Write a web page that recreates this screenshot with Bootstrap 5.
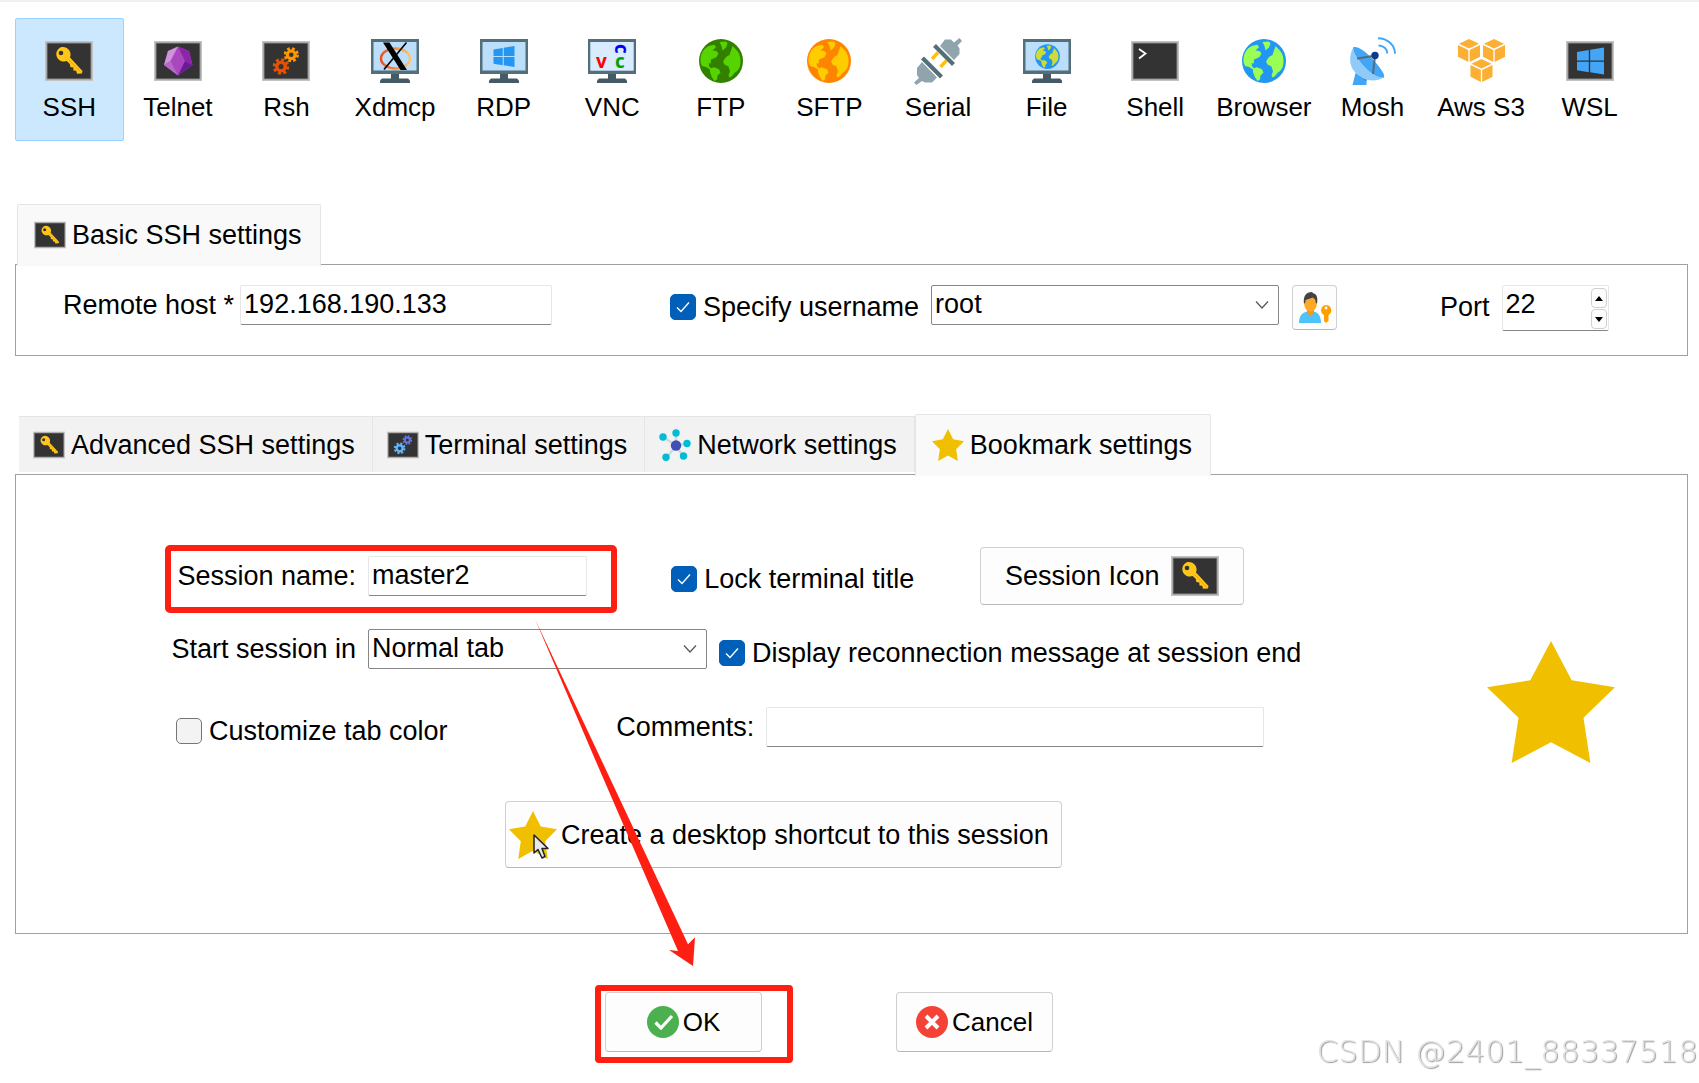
<!DOCTYPE html>
<html lang="en">
<head>
<meta charset="utf-8">
<meta name="viewport" content="width=device-width, initial-scale=1">
<title>Session settings</title>
<link href="https://cdn.jsdelivr.net/npm/bootstrap@5.3.0/dist/css/bootstrap.min.css" rel="stylesheet">
<style>
  body { font-family: "Liberation Sans", Arial, sans-serif; font-size: 27px; line-height: 40px; color: #000; background: #fff; border-top: 2px solid #f0f0f0; }
  label, .tab-text { white-space: nowrap; }

  .session-types { padding: 16px 55px 0 15px; }
  .session-type { flex: 1 1 0; min-width: 0; border: 1px solid transparent; border-radius: 2px; background: none; color: #000; padding: 18px 0; font-size: 26px; line-height: 30px; white-space: nowrap; gap: 7px; }
  .session-type.active { background: #cce8ff; border-color: #99d1ff; }
  .ico { width: 48px; height: 48px; flex: none; display: block; }
  .ico-sm { width: 32px; height: 32px; flex: none; display: block; }

  .settings { padding: 0 11px 0 15px; }
  .settings-basic { margin-top: 63px; }
  .settings-more { margin-top: 58px; }
  .settings .nav-tabs { border: 0; margin-bottom: -2px; padding-left: 2px; position: relative; z-index: 1; }
  .settings .nav-link { display: flex; align-items: center; gap: 6px; height: 62px; margin: 0; padding: 0 18px 2px 16px; border: 1px solid #e5e5e5; border-bottom: 0; border-radius: 2px 2px 0 0; background: #f9f9f9; color: #000; line-height: 40px; }
  .settings .nav-link:not(.active) { height: 56px; margin: 2px 0 4px; padding: 0 17px 0 14px; border-left: 0; border-radius: 0; background: #f2f2f2; }
  .settings .nav-link.active { background: #f9f9f9; color: #000; border-color: #e5e5e5; border-bottom: 0; }
  .settings-more .nav-tabs { padding-left: 4px; }
  .panel { border: 1px solid #a0a0a0; background: #fff; position: relative; }

  .field { display: block; height: 40px; border: 1px solid #e6e6e6; border-bottom: 1px solid #868686; border-radius: 2px; padding: 0 3px 2px; font-size: 27px; line-height: 34px; color: #000; background-color: #fff; }
  .form-select.field { border-color: #868686; padding: 0 34px 2px 3px; background-image: url("data:image/svg+xml,%3Csvg xmlns='http://www.w3.org/2000/svg' viewBox='0 0 14 10'%3E%3Cpath d='M1 1.5l6 6.5 6-6.5' fill='none' stroke='%23555' stroke-width='1.2'/%3E%3C/svg%3E"); background-size: 14px 10px; background-position: right 9px center; }
  .tick { gap: 7px; }
  .tick .form-check-input { width: 26px; height: 26px; margin: 0; border: 1px solid #767676; border-radius: 5px; background-color: #f3f3f3; }
  .tick .form-check-input:checked { background-color: #005fb8; border-color: #005fb8; background-size: 24px 24px; background-image: url("data:image/svg+xml,%3Csvg xmlns='http://www.w3.org/2000/svg' viewBox='0 0 24 24'%3E%3Cpath d='M6 12.5l4 4 8-9' fill='none' stroke='%23fff' stroke-width='1.4'/%3E%3C/svg%3E"); }
  .push { background: #fdfdfd; border: 1px solid #d0d0d0; border-bottom-color: #b8b8b8; border-radius: 4px; color: #000; font-size: 27px; line-height: 40px; padding: 0; display: flex; align-items: center; justify-content: center; white-space: nowrap; }

  .basic-grid { display: grid; grid-template-columns: 607fr 770fr 247fr; padding: 20px 0 24px 47px; }
  .host-group { gap: 6px; }
  .host-field { width: 312px; }
  .user-field { width: 348px; }
  .user-tick { height: 44px; margin-right: 12px; }
  .user-btn { width: 45px; height: 45px; margin-left: 13px; }
  .port-box { width: 107px; position: relative; }
  .port-box .field { width: 100%; height: 46px; padding-bottom: 8px; appearance: textfield; -moz-appearance: textfield; }
  .port-box .field::-webkit-inner-spin-button { appearance: none; -webkit-appearance: none; margin: 0; }
  .steps { position: absolute; right: 2px; top: 3px; display: grid; gap: 1px; }
  .steps button { width: 16px; height: 20px; border: 1px solid #d0d0d0; border-radius: 4px; background: #fdfdfd; padding: 0; display: flex; align-items: center; justify-content: center; }

  .bookmark { padding: 70px 72px 65px 149px; }
  .marked { border: 6px solid #ff1f12; border-radius: 5px; }
  .name-grid { display: grid; grid-template-columns: 507fr 309fr 508fr; align-items: start; }
  .name-box { width: 452px; padding: 5px 0 11px; gap: 12px; }
  .lead-label { text-align: right; width: 191px; }
  .name-box .lead-label { width: 185px; }
  .name-box .field { width: 219px; }
  .tick-name { height: 68px; }
  .icon-btn { width: 264px; height: 58px; margin-top: 2px; gap: 11px; }
  .start-row { margin-top: 16px; gap: 12px; }
  .start-field { width: 339px; }
  .tick-row { height: 48px; }
  .color-row { display: grid; grid-template-columns: 452fr 872fr; margin-top: 30px; }
  .color-row .tick { padding-left: 11px; }
  .comment-field { width: 498px; }
  .shortcut-row { margin: 46px 0 0 340px; }
  .shortcut-btn { width: 557px; height: 67px; gap: 4px; padding: 0 3px; justify-content: flex-start; position: relative; }
  .big-star { width: 128px; height: 122px; margin-top: 96px; flex: none; }
  .pointer { position: absolute; left: 27px; top: 32px; width: 17px; height: 26px; }
  .arrow { position: absolute; left: 519px; top: 144px; width: 162px; height: 348px; pointer-events: none; z-index: 2; }

  .actions { padding: 51px 51px 0 0; gap: 103px; font-size: 26px; }
  .actions .push { width: 157px; height: 60px; font-size: 26px; gap: 4px; }
  .ok-box { padding: 1px 25px 5px 4px; border-radius: 4px; }
  .cancel-wrap { padding-top: 7px; }
  .watermark { position: fixed; right: 1px; bottom: 12px; font-family: "DejaVu Sans", sans-serif; font-weight: 200; font-size: 31px; line-height: 40px; color: #e2e2e2; text-shadow: 1px 1px 1px #999; }
</style>
<script src="https://cdn.jsdelivr.net/npm/bootstrap@5.3.0/dist/js/bootstrap.bundle.min.js"></script>
</head>
<body>

<svg width="0" height="0" class="position-absolute" aria-hidden="true">
  <defs>
    <linearGradient id="ringfill" x1="0" x2="1"><stop offset="0" stop-color="#f04e12"/><stop offset="1" stop-color="#ffc56b"/></linearGradient>
    <symbol id="term" viewBox="0 0 48 48"><path fill="#c3c3c3" d="M0 4h48v40H0z"/><path fill="#8b8b8b" d="M1.500 5.500h45v37h-45z"/><path fill="#333" d="M2.500 6.500h43v35h-43z"/></symbol>
    <symbol id="monitor" viewBox="0 0 48 48"><path fill="#455a64" d="M20 36h8v6h-8z"/><path fill="#455a64" d="M11 41.500h26l2 2V46H9v-2.500z"/><path fill="#546e7a" d="M0 2h48v35H0z"/><path fill="#bbdefb" d="M2.500 5h43v28.500h-43z"/></symbol>
    <symbol id="key" viewBox="0 0 48 48"><path fill="#ffc61a" d="M14 11.500c3-2.500 7.500-1.500 10 1.500 1.800 2.300 2 5 1 7.500L37.500 34l-.5 2.500-5 .3-.8-3-2.700-.2-.2-3-3-.5-.4-3-3.200-3c-3 1-6.600.3-8.700-2.400-2.500-3.200-2.200-7.800 1-10.200z"/><path stroke="#f0a400" stroke-width="1" d="M23.500 22.500l12.500 13"/><circle cx="16" cy="16" r="2.300" fill="#333"/></symbol>
    <symbol id="gear" viewBox="-10 -10 20 20"><circle r="5" fill="none" stroke="currentColor" stroke-width="4"/><circle r="8" fill="none" stroke="currentColor" stroke-width="3.600" stroke-dasharray="3.490 2.793"/></symbol>
    <symbol id="win" viewBox="0 0 24 24"><path d="M0 4l10.500-1.700v9.200H0zM11.700 2L24 0v11.500H11.700zM0 12.700h10.500v9.200L0 20.200zM11.700 12.700H24V24l-12.300-1.900z"/></symbol>
    <symbol id="globe" viewBox="0 0 48 48"><circle cx="24" cy="24" r="22" fill="var(--sea)"/><g fill="var(--land)"><path d="M3.500 25C3 16 7.500 10 13.500 8.500l4-.8 1.500 2.500-3.500 3.300 4 .5 2 2.500-2 3.500-3 1.500-2.500 1-.3 4-2.200-.3.700 3.300 2.300 2.500-1.500.4L9 30l-4-1z"/><path d="M13 31.500l4-1.200 5 2 1.500 3.200-3 3-.5 4-2.500 1.500-2.700-4-1.800-5z"/><path d="M22.500 5l6.500-.5 1.500 2-1.500 4-3.500 3-1-4.500z"/><path d="M35.500 9l2.500 2.500c5 4.500 6.500 10 5 17.500-1 3-2.800 5.500-5 6.500l-3.500 4-2 1-1-2 1.500-4-1.500-5-4-2-1.500-3 3-4.500 3.500-2z"/></g></symbol>
    <symbol id="star" viewBox="0 0 130 124" preserveAspectRatio="none"><path fill="#f0c000" d="M65 0l21 40 44 7-32 31 7 46-40-21-40 21 7-46L0 47l44-7z"/></symbol>
    <symbol id="cube" viewBox="0 0 24 25"><g fill="#fbaf34"><path d="M12 0l10.500 5L12 10 1.500 5zM.5 6.300L11.300 11.400V24L.5 18.600zM23.500 6.300L12.700 11.400V24l10.800-5.400z"/></g></symbol>
    <symbol id="ssh" viewBox="0 0 48 48"><use href="#term"/><use href="#key"/></symbol>
  </defs>
</svg>

<nav class="session-types d-flex" aria-label="Session type">
  <button type="button" class="session-type active d-flex flex-column align-items-center"><svg class="ico"><use href="#ssh"/></svg><span>SSH</span></button>
  <button type="button" class="session-type d-flex flex-column align-items-center">
    <svg class="ico" viewBox="0 0 48 48"><use href="#term"/><path fill="#ab47bc" d="M24 9.500L14 14l-4 14 14 10.500L38.500 28 35 14z"/><path fill="#ce93d8" d="M24 9.500L14 14l-4 14 6.500-4z"/><path fill="#ba68c8" d="M10 28l6.500-4L24 38.500z"/><path fill="#8e24aa" d="M24 9.500L35 14l3.500 14-7.500-4z"/><path fill="#6a1b9a" d="M31 24l7.500 4L24 38.500z"/></svg><span>Telnet</span></button>
  <button type="button" class="session-type d-flex flex-column align-items-center">
    <svg class="ico" viewBox="0 0 48 48"><use href="#term"/><use href="#gear" x="21.500" y="10" width="15.500" height="15.500" color="#ff9800"/><use href="#gear" x="10.500" y="21" width="17" height="17" color="#e65100"/></svg><span>Rsh</span></button>
  <button type="button" class="session-type d-flex flex-column align-items-center">
    <svg class="ico" viewBox="0 0 48 48"><use href="#monitor"/><ellipse cx="24.500" cy="21.500" rx="14.500" ry="10" fill="none" stroke="url(#ringfill)" stroke-width="2.500"/><path d="M12 5.500h6.500L36 33h-6.500z"/><path stroke="#000" stroke-width="1.600" d="M35.500 5.500L13 32.500"/></svg><span>Xdmcp</span></button>
  <button type="button" class="session-type d-flex flex-column align-items-center">
    <svg class="ico" viewBox="0 0 48 48"><use href="#monitor"/><use href="#win" x="13" y="9" width="22" height="21" fill="#2196f3"/></svg><span>RDP</span></button>
  <button type="button" class="session-type d-flex flex-column align-items-center">
    <svg class="ico" viewBox="0 0 48 48" font-family="Open Sans, sans-serif" font-weight="700" font-size="19"><use href="#monitor"/><path fill="#d8ebff" d="M2.500 5h43v28.500h-43z"/><text x="8" y="31" fill="#f00">v</text><text x="27" y="31" fill="#00a000">c</text><text transform="translate(27 7) rotate(90)" fill="#00f">c</text></svg><span>VNC</span></button>
  <button type="button" class="session-type d-flex flex-column align-items-center">
    <svg class="ico" style="--sea:#338000;--land:#55d400"><use href="#globe"/></svg><span>FTP</span></button>
  <button type="button" class="session-type d-flex flex-column align-items-center">
    <svg class="ico" style="--sea:#ff8400;--land:#ffcc00"><use href="#globe"/></svg><span>SFTP</span></button>
  <button type="button" class="session-type d-flex flex-column align-items-center">
    <svg class="ico" viewBox="0 0 48 48"><path fill="#90a4ae" d="M26 9l5-6.500h6l3 3L45.500 1l2.500 3-4.500 4.500 2 3v5.500L40 23zM8 25l-5 6v7l2 3-5 4.500L2.500 48 8 44l3 1.500h7l5-5z"/><path stroke="#ffc107" stroke-width="3.400" d="M18 22l6-6.500M26.500 30l6-6.500"/><path stroke="#546e7a" stroke-width="4.200" d="M20.500 8.500L39.500 27.500M8.500 21L27.500 40"/></svg><span>Serial</span></button>
  <button type="button" class="session-type d-flex flex-column align-items-center">
    <svg class="ico" viewBox="0 0 48 48" style="--sea:#2196f3;--land:#cddc39"><use href="#monitor"/><use href="#globe" x="11" y="6" width="27" height="27"/></svg><span>File</span></button>
  <button type="button" class="session-type d-flex flex-column align-items-center">
    <svg class="ico" viewBox="0 0 48 48"><use href="#term"/><path fill="none" stroke="#fff" stroke-width="1.800" d="M8 12l6.500 4.500L8 21.500"/></svg><span>Shell</span></button>
  <button type="button" class="session-type d-flex flex-column align-items-center">
    <svg class="ico" style="--sea:#2196f3;--land:#99ff55"><use href="#globe"/></svg><span>Browser</span></button>
  <button type="button" class="session-type d-flex flex-column align-items-center">
    <svg class="ico" viewBox="0 0 48 48"><path fill="#42a5f5" d="M7.500 36l11 6v6h-14z"/><path fill="#1976d2" d="M8 37l10.500 7v-3z"/><path fill="#42a5f5" d="M5.500 10c5-1 13 5 20 13s12 15 10.500 17.500c-4 2-13-3-21-12S3.500 12 5.500 10z"/><path fill="#90caf9" d="M5.500 10C1 18 1 28 6 34c8 10 20 12 30 6.500-6 .5-14-4-21-12S5 15 5.500 10z"/><path fill="none" stroke="#546e7a" stroke-width="2" d="M9 21.500l18-2.800L25 37"/><circle cx="27" cy="18.500" r="3.700" fill="#0d3c8c"/><path fill="none" stroke="#42a5f5" stroke-width="1.900" d="M30 1.200c9.500 0 17 7 17 15.500M30.500 8.500c5 0 8.800 3.500 8.800 8"/></svg><span>Mosh</span></button>
  <button type="button" class="session-type d-flex flex-column align-items-center">
    <svg class="ico overflow-visible" viewBox="0 0 48 48"><use href="#cube" x="0" y="2" width="24" height="24"/><use href="#cube" x="25" y="2" width="24" height="24"/><use href="#cube" x="12.500" y="22" width="24" height="24"/></svg><span>Aws S3</span></button>
  <button type="button" class="session-type d-flex flex-column align-items-center">
    <svg class="ico" viewBox="0 0 48 48"><use href="#term"/><use href="#win" x="11" y="10" width="27" height="28" fill="#42a5f5"/></svg><span>WSL</span></button>
</nav>

<main>
  <section class="settings settings-basic">
    <div class="nav nav-tabs">
      <button type="button" class="nav-link active"><svg class="ico-sm"><use href="#ssh"/></svg><span class="tab-text">Basic SSH settings</span></button>
    </div>
    <div class="panel basic-grid">
      <div class="host-group d-flex">
        <label for="host">Remote host *</label>
        <input id="host" class="field host-field" type="text" value="192.168.190.133">
      </div>
      <div class="d-flex">
        <div class="tick user-tick d-flex align-items-center">
          <input id="useuser" class="form-check-input" type="checkbox" checked>
          <label for="useuser">Specify username</label>
        </div>
        <select class="form-select field user-field" aria-label="Username"><option>root</option></select>
        <button type="button" class="push user-btn" aria-label="Manage users">
          <svg width="34" height="32" viewBox="0 0 34 32"><path fill="#4fc3f7" d="M1 31c0-8 4-11 9-11.500h5C20 20 23 24 23 31z"/><path fill="#ff9800" d="M9 17h7v4l-3.500 3L9 21z"/><ellipse cx="12.500" cy="12" rx="6.300" ry="7.500" fill="#ffa726"/><path fill="#424242" d="M6 12C5 4 8 0 14 0l1.500 1.500C19 2 20 6 19 12l-1.500-2V8L15 5.500 7.500 8v2z"/><path fill="#ffa000" d="M28 13a5.500 5.500 0 0 1 2.500 10.300V29L28 31l-2-2v-5.700A5.500 5.500 0 0 1 28 13z"/><circle cx="28" cy="16" r="1.400" fill="#fff"/></svg>
        </button>
      </div>
      <div class="d-flex">
        <label for="port" class="user-tick d-flex align-items-center">Port</label>
        <div class="port-box">
          <input id="port" class="field" type="number" value="22">
          <div class="steps">
            <button type="button" aria-label="Increase port"><svg width="8" height="5"><path d="M0 5l4-5 4 5z"/></svg></button>
            <button type="button" aria-label="Decrease port"><svg width="8" height="5"><path d="M0 0l4 5 4-5z"/></svg></button>
          </div>
        </div>
      </div>
    </div>
  </section>

  <section class="settings settings-more">
    <div class="nav nav-tabs flex-nowrap">
      <button type="button" class="nav-link"><svg class="ico-sm"><use href="#ssh"/></svg><span class="tab-text">Advanced SSH settings</span></button>
      <button type="button" class="nav-link"><svg class="ico-sm" viewBox="0 0 48 48"><use href="#term"/><use href="#gear" x="23" y="9" width="15" height="15" color="#6674e0"/><use href="#gear" x="10" y="20" width="18" height="18" color="#64b5f6"/></svg><span class="tab-text">Terminal settings</span></button>
      <button type="button" class="nav-link"><svg class="ico-sm" viewBox="0 0 32 32"><path stroke="#cfd8dc" stroke-width="2.400" d="M17 16.500V4M17 16.500L4 8M17 16.500l11-2M17 16.500L7 29.500M17 16.500l7.500 11.500"/><g fill="#00bcd4"><circle cx="17" cy="4" r="3.700"/><circle cx="4" cy="8" r="3.700"/><circle cx="28" cy="14.500" r="3.700"/><circle cx="7" cy="28.300" r="3.700"/><circle cx="24.500" cy="27" r="3.700"/></g><circle cx="17" cy="16.500" r="5.200" fill="#3f51b5"/></svg><span class="tab-text">Network settings</span></button>
      <button type="button" class="nav-link active"><svg class="ico-sm"><use href="#star"/></svg><span class="tab-text">Bookmark settings</span></button>
    </div>
    <div class="panel bookmark d-flex">
      <div class="flex-fill">
        <div class="name-grid">
          <div class="name-box marked d-flex">
            <label for="sname" class="lead-label">Session name:</label>
            <input id="sname" class="field" type="text" value="master2">
          </div>
          <div class="tick tick-name d-flex align-items-center">
            <input id="lock" class="form-check-input" type="checkbox" checked>
            <label for="lock">Lock terminal title</label>
          </div>
          <button type="button" class="push icon-btn">Session Icon<svg class="ico"><use href="#ssh"/></svg></button>
        </div>
        <div class="start-row d-flex">
          <label for="startin" class="lead-label">Start session in</label>
          <select id="startin" class="form-select field start-field"><option>Normal tab</option></select>
          <div class="tick tick-row d-flex align-items-center">
            <input id="recon" class="form-check-input" type="checkbox" checked>
            <label for="recon">Display reconnection message at session end</label>
          </div>
        </div>
        <div class="color-row">
          <div class="tick tick-row d-flex align-items-center">
            <input id="tabcolor" class="form-check-input" type="checkbox">
            <label for="tabcolor">Customize tab color</label>
          </div>
          <div class="d-flex">
            <label for="comments" class="me-2 pe-1">Comments:</label>
            <input id="comments" class="field comment-field" type="text">
          </div>
        </div>
        <div class="shortcut-row">
          <button type="button" class="push shortcut-btn"><svg class="ico"><use href="#star"/></svg>Create a desktop shortcut to this session
            <svg class="pointer" viewBox="0 0 17 26"><path fill="#e8e8e8" stroke="#222" stroke-width="1.500" stroke-linejoin="round" d="M1 1v18l4-3.500L9 24l3-1.500L9 14.500h6z"/></svg>
          </button>
        </div>
      </div>
      <svg class="big-star"><use href="#star"/></svg>
      <svg class="arrow" viewBox="0 0 162 350" preserveAspectRatio="none"><path fill="#ff1f12" d="M0 0l66 141 87 186 7-7-2 29-24-16 9 1L60 141z"/></svg>
    </div>
  </section>
</main>

<footer class="actions d-flex justify-content-center">
  <div class="ok-box marked">
    <button type="button" class="push"><svg width="32" height="32" viewBox="0 0 32 32"><circle cx="16" cy="16" r="16" fill="#4caf50"/><path fill="none" stroke="#fff" stroke-width="3.200" d="M8.500 16.500l5.500 5.500L25 10"/></svg>OK</button>
  </div>
  <div class="cancel-wrap">
    <button type="button" class="push"><svg width="32" height="32" viewBox="0 0 32 32"><circle cx="16" cy="16" r="16" fill="#f44336"/><path stroke="#fff" stroke-width="4" d="M10 10l12 12M22 10L10 22"/></svg>Cancel</button>
  </div>
</footer>
<div class="watermark">CSDN @2401_88337518</div>
</body>
</html>
